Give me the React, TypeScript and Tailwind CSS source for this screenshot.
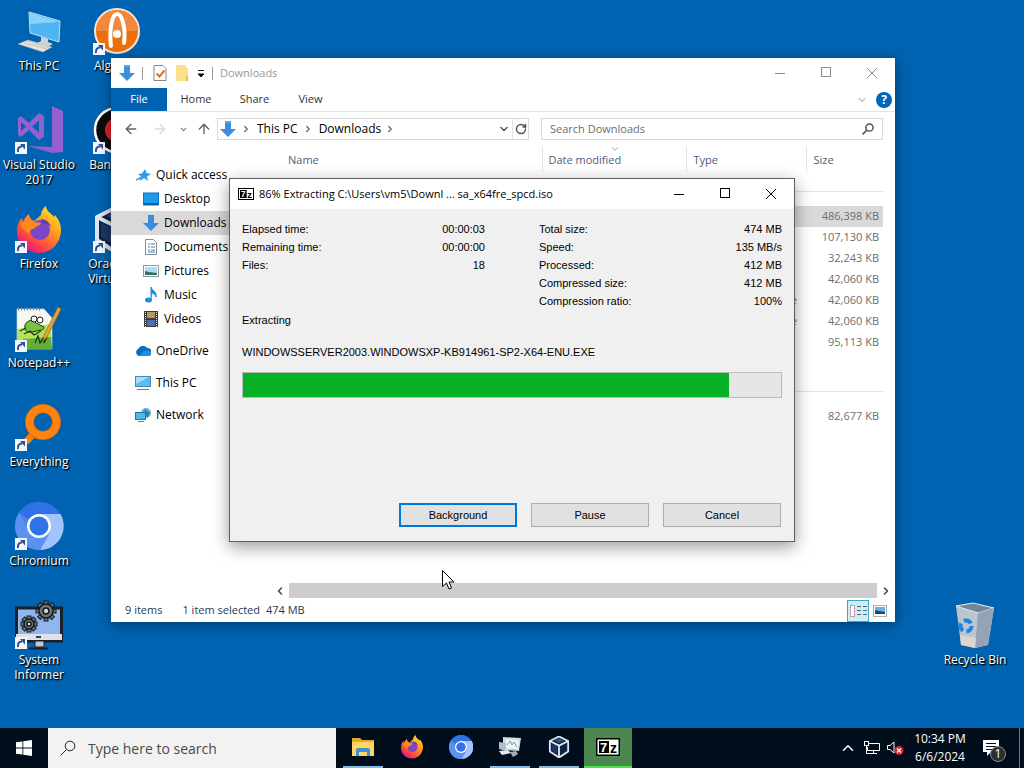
import type { ReactNode } from 'react'
import { ArrowLeft, ArrowRight, ArrowUp, ChevronDown, ChevronLeft, ChevronRight, ChevronUp, RotateCw } from 'lucide-react'

function ShortcutArrow() {
  return (
    <g>
      <rect x="0" y="35" width="12" height="12" fill="#f4f6fb" />
      <path d="M3 45c-.5-3.500 1-5.500 4-5.500" fill="none" stroke="#2c4f94" strokeWidth="2" />
      <path d="M5 37h5v5.500z" fill="#2c4f94" />
    </g>
  )
}

function Icon48({ children, shortcut = true }: { children: ReactNode; shortcut?: boolean }) {
  return (
    <svg viewBox="0 0 48 48" className="size-12 overflow-visible" aria-hidden="true">
      {children}
      {shortcut && <ShortcutArrow />}
    </svg>
  )
}

function Magnifier({ className, strokeWidth }: { className: string; strokeWidth: number }) {
  return (
    <svg viewBox="0 0 16 16" className={className} fill="none" stroke="currentColor" strokeWidth={strokeWidth} aria-hidden="true">
      <circle cx="10" cy="6" r="4.800" />
      <path d="M6.500 9.500.800 15.200" />
    </svg>
  )
}

function FirefoxShape() {
  return (
    <>
      <defs>
        <linearGradient id="fx" x1="0.85" y1="0.05" x2="0.25" y2="0.95">
          <stop offset="0" stopColor="#ffe226" />
          <stop offset="0.4" stopColor="#ff9a1f" />
          <stop offset="0.75" stopColor="#ff4a3d" />
          <stop offset="1" stopColor="#e31587" />
        </linearGradient>
      </defs>
      <path
        d="M26 9C26 5 29 1 31 0c0 5 5 7 8 11l1-2c5 6 6 11 6 15 0 12-9 23-22 23S2 37 2 26C2 20 4 14 7 12l1 4c1-3 3-6 6-8 0 3 2 6 5 7z"
        fill="url(#fx)"
      />
      <circle cx="25" cy="24" r="10" fill="#7c46c9" />
      <path d="M6 18c4-4 8-4 12-2 2 1 5 0 8 1-1 3-6 3-7 6-3 0-5 2-4 5-5-2-8-6-9-10z" fill="#ff8a1c" />
      <path d="M26 13c5 0 9 4 10 8-3-3-6-4-9-4z" fill="#5b3fb5" />
    </>
  )
}

function ChromiumShape() {
  return (
    <>
      <circle cx="24" cy="23" r="24" fill="#4e83ec" />
      <path d="M24 23 4 10A24 24 0 0 1 45 11H24z" fill="#2f72e8" />
      <path d="M24 11h21.500A24 24 0 0 1 25 47l10-18z" fill="#a3c4fb" />
      <path d="M4 10A24 24 0 0 0 25 47l8-14-18-4z" fill="#5b92f2" />
      <circle cx="24" cy="23" r="12" fill="#fff" />
      <circle cx="24" cy="23" r="9.500" fill="#2f74e6" />
    </>
  )
}

function CubeShape() {
  return (
    <>
      <path d="M24 1 44 11v23L24 47 4 34V11z" fill="#0e2444" stroke="#dfe6f2" strokeWidth="4" strokeLinejoin="round" />
      <path d="M4 11l20 10 20-10M24 21v26" fill="none" stroke="#dfe6f2" strokeWidth="4" />
      <path d="M14 10l10-5 10 5-10 5z" fill="#35507c" />
      <path d="M8 17l12 6v15L8 31z" fill="#1c3763" />
    </>
  )
}

const GEAR_ANGLES = [0, 45, 90, 135, 180, 225, 270, 315]

function Gear({ cx, cy, r }: { cx: number; cy: number; r: number }) {
  return (
    <g>
      {GEAR_ANGLES.map((a) => (
        <rect
          key={a}
          x={cx - 2}
          y={cy - r - 3}
          width="4"
          height="5"
          fill="#6d747b"
          stroke="#15191d"
          strokeWidth="1"
          transform={`rotate(${a} ${cx} ${cy})`}
        />
      ))}
      <circle cx={cx} cy={cy} r={r} fill="#6d747b" stroke="#15191d" strokeWidth="1.500" />
      <circle cx={cx} cy={cy} r={r / 2.4} fill="#d5dbe2" stroke="#15191d" strokeWidth="1.500" />
    </g>
  )
}

function DownArrow({ className }: { className: string }) {
  return (
    <svg viewBox="0 0 16 16" className={className} aria-hidden="true">
      <path d="M5 0h6v8h5l-8 8-8-8h5z" fill="#3b8ede" />
      <path d="M5 0h6v2H5z" fill="#5ba5e8" />
    </svg>
  )
}

const COLUMN_ONE = [
  {
    label: 'This PC',
    icon: (
      <Icon48 shortcut={false}>
        <path d="M14 4l31 9-1 21-29-9z" fill="#4fb4f2" stroke="#c9dbe8" strokeWidth="1" />
        <path d="M15 5l29 9-29 2z" fill="#8bd2fa" />
        <path d="M26 29l7 2v3l5 2-6 3-12-3 6-3z" fill="#cdd5da" />
        <path d="M13 32l24 7-9 5L3 36z" fill="#e4e4e0" stroke="#a9a9a4" strokeWidth="0.500" />
        <path d="M9 35l23 6M12 33l22 7" stroke="#b6b6b2" strokeWidth="0.700" />
      </Icon48>
    ),
  },
  {
    label: 'Visual Studio 2017',
    icon: (
      <Icon48>
        <path d="M37-1l11 5v41l-11 1-24-7 24 1z" fill="#9460cf" />
        <path d="M3 11l3-2 8 7 10-10 5 3v21l-5 3-10-10-8 7-3-2zM6 15v9l5-4.500zM17 19.500l7 6v-12z" fill="#9460cf" fillRule="evenodd" />
      </Icon48>
    ),
  },
  { label: 'Firefox', icon: <Icon48><FirefoxShape /></Icon48> },
  {
    label: 'Notepad++',
    icon: (
      <Icon48>
        <path d="M2 4h27l8 9v31H2z" fill="#f7f9f4" stroke="#c7ccc4" strokeWidth="0.700" />
        <path d="M2 24l34-5 1 25H2z" fill="#b5e05a" />
        <path d="M8 34l28-2 1 12H8z" fill="#66ad35" />
        <path d="M3 4h24" stroke="#7d8790" strokeWidth="3" strokeDasharray="1 2" />
        <path d="M10 20c2-5 8-6 11-2l6 3c3 1 3 3-1 4l-9 2c-5 1-8-2-7-7z" fill="#7cc242" stroke="#1d3a12" strokeWidth="1" />
        <circle cx="19" cy="14" r="3" fill="#fff" stroke="#1c1c1c" strokeWidth="1" />
        <circle cx="25" cy="15" r="3" fill="#fff" stroke="#1c1c1c" strokeWidth="1" />
        <path d="M5 26l6-3M9 29l6-3 4 4 7-4M20 38l3-7 2 7 4-6v6l3-6" fill="none" stroke="#1d3a12" strokeWidth="1.300" />
        <path d="M43 2l3 2-14 28-4 4 1-6z" fill="#e0a63b" stroke="#9b6a17" strokeWidth="0.700" />
      </Icon48>
    ),
  },
  {
    label: 'Everything',
    icon: (
      <Icon48>
        <path d="M20 28l-9 10" stroke="#ff7f0a" strokeWidth="7" />
        <circle cx="28" cy="18" r="13.500" fill="none" stroke="#c9661c" strokeWidth="9" />
        <circle cx="28" cy="18" r="13.500" fill="none" stroke="#ff830d" strokeWidth="7.500" />
      </Icon48>
    ),
  },
  { label: 'Chromium', icon: <Icon48><ChromiumShape /></Icon48> },
  {
    label: 'System Informer',
    icon: (
      <Icon48>
        <rect x="1.500" y="6" width="45" height="33" fill="#8fb7ee" stroke="#1a2129" strokeWidth="3" />
        <rect x="1" y="32" width="46" height="6" fill="#dfe3e8" />
        <rect x="21" y="34" width="5" height="2" fill="#39424c" />
        <path d="M20 39h9v6h-9z" fill="#c3c8ce" stroke="#1a2129" strokeWidth="1" />
        <path d="M14 46.500h19" stroke="#1a2129" strokeWidth="2" />
        <Gear cx={31} cy={9} r={7} />
        <Gear cx={14} cy={22} r={5} />
      </Icon48>
    ),
  },
]

const COLUMN_TWO = [
  {
    label: 'Algodoo',
    icon: (
      <Icon48>
        <circle cx="24" cy="23" r="22" fill="#ec6f0a" stroke="#f3e6d8" strokeWidth="2" />
        <path d="M3 23a21 21 0 0 1 42 0z" fill="#f3873a" />
        <path d="M18 38c-2-16 1-32 6-32s9 14 7 29" fill="none" stroke="#fff" strokeWidth="4" strokeLinecap="round" />
        <circle cx="24" cy="26" r="4" fill="#fff" />
      </Icon48>
    ),
  },
  {
    label: 'Bandicam',
    icon: (
      <Icon48>
        <circle cx="24" cy="23" r="22" fill="#0b0b0b" stroke="#fff" strokeWidth="2.500" />
        <circle cx="24" cy="23" r="12" fill="#e0202c" />
      </Icon48>
    ),
  },
  { label: 'Oracle VM VirtualBox', icon: <Icon48><CubeShape /></Icon48> },
]

function DesktopIcon({ label, children }: { label: string; children: ReactNode }) {
  return (
    <button className="flex h-[99px] w-[78px] flex-col items-center gap-[2px] pt-2 text-[12px] leading-[15px] text-white [text-shadow:1px_1px_2px_#000,1px_1px_1px_#000]">
      {children}
      <span>{label}</span>
    </button>
  )
}

const QUICK_ACCESS = [
  {
    label: 'Desktop',
    icon: (
      <>
        <rect x="0.500" y="2" width="15" height="12" fill="#1a9bf0" stroke="#0f73bd" />
        <rect x="1" y="12" width="14" height="2" fill="#0c5f9f" />
      </>
    ),
  },
  { label: 'Downloads', icon: <path d="M5 0h6v8h5l-8 8-8-8h5z" fill="#3b8ede" /> },
  {
    label: 'Documents',
    icon: (
      <>
        <path d="M2.500.5h8l3 3v12h-11z" fill="#fff" stroke="#7d8b97" />
        <path d="M5 5h2M8 5h4M5 8h2M8 8h4M5 11h2M8 11h4M5 13h7" stroke="#3f7fb8" />
      </>
    ),
  },
  {
    label: 'Pictures',
    icon: (
      <>
        <rect x="0.500" y="2.500" width="15" height="11" fill="#fff" stroke="#8f979e" />
        <rect x="2" y="4" width="12" height="8" fill="#a9dcf5" />
        <path d="M2 8l4 1 8 1v2H2z" fill="#2f6f66" />
      </>
    ),
  },
  {
    label: 'Music',
    icon: (
      <>
        <ellipse cx="5.500" cy="13" rx="3.500" ry="2.500" fill="#1c8ee0" />
        <path d="M8 13V0c1 4 6 4 5 10-1-3-2-3-4-4" fill="#1c8ee0" stroke="#1c8ee0" strokeWidth="1" />
      </>
    ),
  },
  {
    label: 'Videos',
    icon: (
      <>
        <rect x="1" y="0" width="14" height="16" fill="#3a3a3f" />
        <rect x="4" y="1" width="8" height="6" fill="#b59a52" />
        <rect x="4" y="9" width="8" height="6" fill="#4d6fb5" />
        <path d="M2.500 1v15M13.500 1v15" stroke="#e6e6e6" strokeWidth="1" strokeDasharray="1 1" />
      </>
    ),
  },
]

const PLACES = [
  {
    label: 'OneDrive',
    icon: (
      <>
        <path d="M4 13a4 4 0 0 1-.500-7.500A5 5 0 0 1 12 5a4 4 0 0 1 1 8z" fill="#0f6cbd" />
        <path d="M4 13l5-5c3-2 7 0 7 2.500 0 1.500-1 2.500-2.500 2.500z" fill="#1b8fe0" />
      </>
    ),
  },
  {
    label: 'This PC',
    icon: (
      <>
        <rect x="0.500" y="1.500" width="15" height="10" fill="#58bdf5" stroke="#4d89ab" />
        <path d="M1 2h13L1 9z" fill="#a5def9" />
        <path d="M2 14.500h12" stroke="#6a7c88" />
      </>
    ),
  },
  {
    label: 'Network',
    icon: (
      <>
        <circle cx="11" cy="6" r="5" fill="#5db5dd" />
        <path d="M9 2l6 4-3 5z" fill="#2b7fae" />
        <rect x="0.500" y="5.500" width="10" height="7" fill="#4fb7ef" stroke="#2b7399" />
        <path d="M3 14.500h6" stroke="#6a7c88" />
      </>
    ),
  },
]

function SmallIcon({ children }: { children: ReactNode }) {
  return (
    <svg viewBox="0 0 16 16" className="size-4 shrink-0" aria-hidden="true">
      {children}
    </svg>
  )
}

function Sidebar() {
  return (
    <nav className="w-[160px] shrink-0 pt-[17px] text-[12px] text-black">
      <a href="#quick-access" className="flex h-6 items-center gap-1 pl-[25px]">
        <SmallIcon>
          <path d="M9 2l1.500 4 4.500 1-4 2.500 1 4.500-4-3-4.500 3L5 9.500 2 7l4-.5z" fill="#2a9be8" />
          <path d="M0 13l5-2.500" stroke="#2a9be8" strokeWidth="1.500" />
        </SmallIcon>
        Quick access
      </a>
      {QUICK_ACCESS.map((item) => (
        <a
          key={item.label}
          href={`#${item.label.toLowerCase()}`}
          className={`flex h-6 items-center gap-[5px] pl-8 ${item.label === 'Downloads' ? 'bg-[#d9d9d9]' : ''}`}
        >
          <SmallIcon>{item.icon}</SmallIcon>
          {item.label}
        </a>
      ))}
      {PLACES.map((item) => (
        <a key={item.label} href={`#place-${item.label.toLowerCase()}`} className="mt-2 flex h-6 items-center gap-[5px] pl-6">
          <SmallIcon>{item.icon}</SmallIcon>
          {item.label}
        </a>
      ))}
    </nav>
  )
}

interface FileEntry {
  type: string
  size: string
  selected?: boolean
}

const FILES_TODAY: FileEntry[] = [
  { type: '', size: '486,398 KB', selected: true },
  { type: '', size: '107,130 KB' },
  { type: '', size: '32,243 KB' },
  { type: '', size: '42,060 KB' },
  { type: 'e', size: '42,060 KB' },
  { type: 'e', size: '42,060 KB' },
  { type: '', size: '95,113 KB' },
]

const FILES_EARLIER: FileEntry[] = [{ type: '', size: '82,677 KB' }]

function FileRow({ file }: { file: FileEntry }) {
  return (
    <tr className={`h-[21px] ${file.selected ? 'bg-[#d9d9d9]' : ''}`}>
      <td />
      <td />
      <td className="pr-[9px] text-right">{file.type}</td>
      <td className="pr-1 text-right">{file.size}</td>
    </tr>
  )
}

function FileTable() {
  return (
    <table className="mr-3 flex-1 table-fixed border-collapse text-[11px] text-[#6d6d6d]">
      <thead>
        <tr className="h-[26px] text-[#4c607a]">
          <th className="border-r border-[#e5e5e5] pt-[3px] pl-[17px] text-left font-normal">Name</th>
          <th className="relative w-36 border-r border-[#e5e5e5] pt-[3px] pl-[6px] text-left font-normal">
            <ChevronDown className="absolute top-[-2px] left-[67px] size-[10px] text-[#8a8a8a]" strokeWidth={2} />
            Date modified
          </th>
          <th className="w-[120px] border-r border-[#e5e5e5] pt-[3px] pl-[7px] text-left font-normal">Type</th>
          <th className="w-[77px] pt-[3px] pl-[7px] text-left font-normal">Size</th>
        </tr>
      </thead>
      <tbody>
        <tr className="h-[34px]">
          <td colSpan={4} className="pt-1">
            <div className="h-px bg-[#e2e2e2]" />
          </td>
        </tr>
        {FILES_TODAY.map((file, i) => (
          <FileRow key={i} file={file} />
        ))}
      </tbody>
      <tbody>
        <tr className="h-[53px]">
          <td colSpan={4} className="pt-6">
            <div className="h-px bg-[#e2e2e2]" />
          </td>
        </tr>
        {FILES_EARLIER.map((file, i) => (
          <FileRow key={i} file={file} />
        ))}
      </tbody>
    </table>
  )
}

function WindowButtons({ className }: { className: string }) {
  return (
    <div className={`flex h-full ${className}`}>
      <button aria-label="Minimize" className="flex w-[46px] items-center justify-center">
        <svg viewBox="0 0 12 12" className="size-3"><path d="M1 6.500h10" stroke="currentColor" /></svg>
      </button>
      <button aria-label="Maximize" className="flex w-[46px] items-center justify-center">
        <svg viewBox="0 0 12 12" className="size-3"><rect x="1.500" y="0.500" width="9" height="9" fill="none" stroke="currentColor" /></svg>
      </button>
      <button aria-label="Close" className="flex w-[46px] items-center justify-center">
        <svg viewBox="0 0 12 12" className="size-3"><path d="M1 1l10 10M11 1L1 11" stroke="currentColor" /></svg>
      </button>
    </div>
  )
}

function ExplorerWindow() {
  return (
    <section
      aria-label="Downloads"
      className="absolute top-[58px] right-[129px] bottom-[106px] left-[111px] flex flex-col bg-white shadow-[0_2px_12px_rgba(0,0,0,0.45)]"
    >
      <header className="flex h-[30px] shrink-0 items-center pl-2">
        <DownArrow className="size-4" />
        <span className="ml-[7px] h-[13px] w-px bg-[#9a9a9a]" />
        <svg viewBox="0 0 14 16" className="ml-[10px] h-4 w-[14px]" aria-hidden="true">
          <path d="M1 .5h9l3 3v12H1z" fill="#fff" stroke="#878787" />
          <path d="M3.500 8.500l3 3 5-6" fill="none" stroke="#e0702a" strokeWidth="2" />
        </svg>
        <svg viewBox="0 0 14 16" className="ml-2 h-4 w-[14px]" aria-hidden="true">
          <path d="M1 0h10v3h2v13H1z" fill="#fbe08a" />
          <path d="M11 11h2v5h-2z" fill="#e8c14c" />
        </svg>
        <button aria-label="Customize Quick Access Toolbar" className="ml-2">
          <svg viewBox="0 0 8 8" className="size-2"><path d="M1 1.500h6M1 5h6L4 8z" stroke="#111" fill="#111" strokeWidth="1" /></svg>
        </button>
        <span className="ml-[7px] h-[13px] w-px bg-[#9a9a9a]" />
        <h1 className="ml-[7px] flex-1 text-[11px] text-[#999]">Downloads</h1>
        <WindowButtons className="text-[#8a8a8a]" />
      </header>

      <div className="flex h-6 shrink-0 items-stretch border-b border-[#e3e3e3] text-[11px] text-[#333]">
        <button className="w-14 bg-[#0063b1] text-white">File</button>
        <button className="w-[58px]">Home</button>
        <button className="w-[59px]">Share</button>
        <button className="w-[53px]">View</button>
        <div className="flex flex-1 items-center justify-end gap-2 pr-[3px]">
          <ChevronDown className="size-3 text-[#8a8a8a]" />
          <button aria-label="Help" className="size-4 rounded-full bg-[#0067b8] text-[12px] leading-4 font-bold text-white">?</button>
        </div>
      </div>

      <div className="flex h-[34px] shrink-0 items-center px-3 text-[12px]">
        <button aria-label="Back"><ArrowLeft className="size-4 text-[#5f5f5f]" /></button>
        <button aria-label="Forward" className="ml-[13px]"><ArrowRight className="size-4 text-[#dadada]" /></button>
        <button aria-label="Recent locations" className="ml-[11px]"><ChevronDown className="size-[9px] text-[#777]" strokeWidth={3} /></button>
        <button aria-label="Up" className="ml-2"><ArrowUp className="size-4 text-[#5f5f5f]" /></button>
        <div className="ml-[5px] flex h-[22px] flex-1 items-center border border-[#d9d9d9] pl-[2px] text-black">
          <DownArrow className="size-4" />
          <ChevronRight className="ml-[5px] size-[10px] text-[#666]" strokeWidth={3} />
          <button className="ml-[6px]">This PC</button>
          <ChevronRight className="ml-[5px] size-[10px] text-[#666]" strokeWidth={3} />
          <button className="ml-[6px]">Downloads</button>
          <ChevronRight className="ml-1 size-[10px] text-[#666]" strokeWidth={3} />
          <button aria-label="Previous locations" className="ml-auto"><ChevronDown className="size-3 text-[#555]" strokeWidth={3} /></button>
          <button aria-label="Refresh" className="ml-[2px] flex h-full w-4 items-center justify-center border-l border-[#e3e3e3]">
            <RotateCw className="size-3 text-[#555]" strokeWidth={3} />
          </button>
        </div>
        <div className="ml-3 flex h-[22px] w-[342px] items-center border border-[#d9d9d9] px-2">
          <input
            aria-label="Search Downloads"
            placeholder="Search Downloads"
            className="min-w-0 flex-1 text-[11px] text-[#6d6d6d] outline-none placeholder:text-[#6d6d6d]"
          />
          <Magnifier className="size-3 text-[#555]" strokeWidth={2} />
        </div>
      </div>

      <div className="flex min-h-0 flex-1">
        <Sidebar />
        <div className="flex min-w-0 flex-1 flex-col justify-between">
          <div className="flex">
            <FileTable />
          </div>
          <div className="flex h-[15px] items-center">
            <button aria-label="Scroll left" className="flex w-[18px] justify-center"><ChevronLeft className="size-3 text-[#444]" strokeWidth={3} /></button>
            <div className="h-full flex-1 bg-[#cdcdcd]" />
            <button aria-label="Scroll right" className="flex w-[18px] justify-center"><ChevronRight className="size-3 text-[#444]" strokeWidth={3} /></button>
          </div>
        </div>
      </div>

      <footer className="flex h-6 shrink-0 items-center pt-px pr-2 pl-[14px] text-[11px] text-[#1e395b]">
        <span>9 items</span>
        <span className="ml-5">1 item selected</span>
        <span className="ml-[6px]">474 MB</span>
        <button aria-label="Details view" className="ml-auto flex size-[22px] items-center justify-center border border-[#3ca6c9] bg-[#cdeef6]">
          <svg viewBox="0 0 18 14" className="h-[14px] w-[18px]">
            <rect x="1.500" y="1.500" width="4" height="11" fill="#fff" stroke="#b06a7c" strokeDasharray="2 1" />
            <path d="M8 2.500h4M14 2.500h4M8 6.500h4M14 6.500h4M8 10.500h4M14 10.500h4" stroke="#54677e" />
          </svg>
        </button>
        <button aria-label="Large icons view" className="ml-1">
          <svg viewBox="0 0 14 12" className="h-3 w-[14px]">
            <rect x="0.500" y="0.500" width="13" height="11" fill="#fff" stroke="#9fb2c4" />
            <rect x="2" y="2" width="10" height="7" fill="#69b1e6" />
            <path d="M2 5l4 1 6 1v2H2z" fill="#1f4d4b" />
          </svg>
        </button>
      </footer>
    </section>
  )
}

function SevenZipLogo({ className }: { className: string }) {
  return (
    <svg viewBox="0 0 24 18" className={className} aria-hidden="true">
      <rect x="0" y="0" width="24" height="18" fill="#000" />
      <rect x="1.500" y="1.500" width="21" height="15" fill="#fff" />
      <rect x="3" y="3" width="10" height="12" fill="#000" />
      <text x="4" y="14" fontSize="13" fontWeight="700" fontFamily="Liberation Sans" fill="#fff">7</text>
      <text x="14" y="15" fontSize="14" fontWeight="700" fontFamily="Liberation Sans" fill="#000">z</text>
    </svg>
  )
}

const STATS_LEFT = [
  ['Elapsed time:', '00:00:03'],
  ['Remaining time:', '00:00:00'],
  ['Files:', '18'],
]

const STATS_RIGHT = [
  ['Total size:', '474 MB'],
  ['Speed:', '135 MB/s'],
  ['Processed:', '412 MB'],
  ['Compressed size:', '412 MB'],
  ['Compression ratio:', '100%'],
]

function Stats({ rows }: { rows: string[][] }) {
  return (
    <dl>
      {rows.map(([label, value]) => (
        <div key={label} className="flex h-[18px] items-center justify-between">
          <dt>{label}</dt>
          <dd>{value}</dd>
        </div>
      ))}
    </dl>
  )
}

function ExtractDialog() {
  const progress = 90.3

  return (
    <section
      role="dialog"
      aria-label="Extracting"
      className="absolute top-[178px] right-[229px] bottom-[186px] left-[229px] flex flex-col border border-[#5f5f5f] bg-[#f0f0f0] shadow-[0_5px_16px_rgba(0,0,0,0.4)]"
    >
      <header className="flex h-[30px] shrink-0 items-center bg-white pl-2">
        <SevenZipLogo className="h-3 w-4" />
        <h2 className="ml-[5px] flex-1 text-[11px] text-black">86% Extracting C:\Users\vm5\Downl ... sa_x64fre_spcd.iso</h2>
        <WindowButtons className="text-black" />
      </header>
      <div className="flex flex-1 flex-col px-3 pt-[11px] pb-[14px] font-['Liberation_Sans',sans-serif] text-[11px] text-black">
        <div className="grid grid-cols-2 gap-[54px]">
          <Stats rows={STATS_LEFT} />
          <Stats rows={STATS_RIGHT} />
        </div>
        <p className="mt-px leading-[18px]">Extracting</p>
        <p className="mt-[14px] leading-[18px]">WINDOWSSERVER2003.WINDOWSXP-KB914961-SP2-X64-ENU.EXE</p>
        <div
          role="progressbar"
          aria-label="Extraction progress"
          aria-valuenow={progress}
          className="mt-[11px] h-[26px] border border-[#bcbcbc] bg-[#e6e6e6]"
        >
          <div className="h-full bg-[#06b025]" style={{ width: `${progress}%` }} />
        </div>
        <div className="mt-auto flex justify-end gap-[14px] pr-px">
          <button className="h-6 w-[118px] border-2 border-[#0078d7] bg-[#e1e1e1]">Background</button>
          <button className="h-6 w-[118px] border border-[#adadad] bg-[#e1e1e1]">Pause</button>
          <button className="h-6 w-[118px] border border-[#adadad] bg-[#e1e1e1]">Cancel</button>
        </div>
      </div>
    </section>
  )
}

const TASKS = [
  {
    label: 'File Explorer',
    running: true,
    icon: (
      <svg viewBox="0 0 24 20" className="h-5 w-6">
        <path d="M1 1h8l2 2h12v16H1z" fill="#e9a825" />
        <path d="M1 5h22v14H1z" fill="#ffd567" />
        <path d="M5 19v-6c0-1 1-2 2-2h10c1 0 2 1 2 2v6h-3v-4H8v4z" fill="#3d8fd6" />
      </svg>
    ),
  },
  { label: 'Firefox', running: false, icon: <svg viewBox="0 0 48 48" className="size-6"><FirefoxShape /></svg> },
  { label: 'Chromium', running: false, icon: <svg viewBox="0 -1 48 48" className="size-6"><ChromiumShape /></svg> },
  {
    label: 'System monitor',
    running: true,
    icon: (
      <svg viewBox="0 0 24 22" className="h-[22px] w-6">
        <path d="M5 1l18 1-2 13-16-1z" fill="#d3dadd" />
        <path d="M8 3l13 1-1 9-12-1z" fill="#eef4f6" />
        <path d="M9 9l3-4 2 4 2-3 3 5" fill="none" stroke="#57a9bd" strokeWidth="1" />
        <path d="M1 6l7 1v8l-7-2z" fill="#b6bcc0" />
        <path d="M1 15l9-1 3 3-9 2z" fill="#e9e9e9" />
        <path d="M12 16l6-1 2 3-5 3z" fill="#a8adb0" />
      </svg>
    ),
  },
  { label: 'VirtualBox', running: true, icon: <svg viewBox="0 0 48 48" className="size-[22px]"><CubeShape /></svg> },
]

function Taskbar() {
  return (
    <footer className="flex h-10 shrink-0 items-stretch bg-[#000d1a] text-white">
      <button aria-label="Start" className="flex w-12 items-center justify-center">
        <svg viewBox="0 0 16 16" className="size-4">
          <path d="M0 2.300 6.500 1.400v6.200H0zM7.300 1.300 16 0v7.600H7.300zM0 8.400h6.500v6.200L0 13.700zM7.300 8.400H16V16l-8.700-1.300z" fill="#fff" />
        </svg>
      </button>
      <label className="flex w-[288px] items-center gap-3 bg-[#f2f2f2] pl-3 text-[#444]">
        <Magnifier className="size-4 text-[#222]" strokeWidth={1} />
        <input
          aria-label="Type here to search"
          placeholder="Type here to search"
          className="min-w-0 flex-1 text-[14px] outline-none placeholder:text-[#4a4a4a]"
        />
      </label>
      <div className="ml-[3px] flex gap-px">
        {TASKS.map((task) => (
          <button key={task.label} aria-label={task.label} className="flex w-12 flex-col items-center">
            <span className="flex flex-1 items-center">{task.icon}</span>
            <span className={`h-[2px] w-10 ${task.running ? 'bg-[#85b9e6]' : ''}`} />
          </button>
        ))}
        <button aria-label="7-Zip" className="flex w-12 flex-col items-center bg-[#4b8550]">
          <span className="flex flex-1 items-center">
            <SevenZipLogo className="h-[18px] w-6" />
          </span>
          <span className="h-[2px] w-full bg-[#4be23c]" />
        </button>
      </div>

      <div className="ml-auto flex items-center">
        <button aria-label="Show hidden icons"><ChevronUp className="size-[18px]" strokeWidth={2} /></button>
        <svg viewBox="0 0 16 14" className="ml-[7px] h-[14px] w-4" fill="none" stroke="#fff" aria-hidden="true">
          <path d="M5 2.500h10.500v7H3.500V6M9.500 9.500v3M6 12.500h7" />
          <rect x="0.500" y="0.500" width="4" height="4" />
          <path d="M2.500 5v7.500H6" />
        </svg>
        <svg viewBox="0 0 18 14" className="ml-[7px] h-[14px] w-[18px]" aria-hidden="true">
          <path d="M.5 4.500h2.500l4-3.500v11l-4-3.500H.5z" fill="none" stroke="#fff" />
          <circle cx="12" cy="9.500" r="4.500" fill="#d9232e" />
          <path d="M10 7.500l4 4M14 7.500l-4 4" stroke="#fff" strokeWidth="1.300" />
        </svg>
        <div className="ml-[5px] w-[60px] text-center text-[12px] leading-[18px]">
          <div>10:34 PM</div>
          <div>6/6/2024</div>
        </div>
        <button aria-label="Notifications" className="relative mr-[19px] ml-3">
          <svg viewBox="0 0 18 18" className="size-[18px]">
            <path d="M1 1h16v12H9l-4 4v-4H1z" fill="#fff" />
            <path d="M4 4.500h10M4 7.500h10M4 10.500h6" stroke="#000d1a" />
          </svg>
          <span className="absolute top-[7px] left-[8px] size-4 rounded-full border border-[#8b8b8b] bg-[#2b2f33] text-[12px] leading-[14px]">1</span>
        </button>
        <span className="h-full w-[5px] border-l border-[#6b737b]" />
      </div>
    </footer>
  )
}

export default function App() {
  return (
    <div className="flex min-h-screen flex-col bg-[#0063b1] font-['Open_Sans','Noto_Sans',sans-serif]">
      <main className="relative flex flex-1">
        <div>
          {COLUMN_ONE.map((item) => (
            <DesktopIcon key={item.label} label={item.label}>{item.icon}</DesktopIcon>
          ))}
        </div>
        <div>
          {COLUMN_TWO.map((item) => (
            <DesktopIcon key={item.label} label={item.label}>{item.icon}</DesktopIcon>
          ))}
        </div>
        <div className="mr-[10px] ml-auto pt-[594px]">
          <DesktopIcon label="Recycle Bin">
            <Icon48 shortcut={false}>
              <path d="M5 4l17-3 21 5-6 37-13 3-14-3z" fill="#b9c6d0" />
              <path d="M5 4l17-3 21 5-16 5z" fill="#6f8799" stroke="#e3ebf0" strokeWidth="1" />
              <path d="M27 11l16-5-6 37-13 3z" fill="#93a5b4" />
              <path d="M9 33l16 3-1 10-14-3z" fill="#dcd5cc" />
              <circle cx="15" cy="24" r="5.500" fill="none" stroke="#1e82d8" strokeWidth="4" strokeDasharray="8 3.500" />
            </Icon48>
          </DesktopIcon>
        </div>
        <ExplorerWindow />
        <ExtractDialog />
        <svg viewBox="0 0 13 20" className="absolute top-[570px] left-[442px] h-5 w-[13px]" aria-hidden="true">
          <path d="M.5.500v16l4-3.500 2.500 6 2.500-1-2.500-6h5z" fill="#fff" stroke="#000" strokeWidth="1" />
        </svg>
      </main>
      <Taskbar />
    </div>
  )
}
